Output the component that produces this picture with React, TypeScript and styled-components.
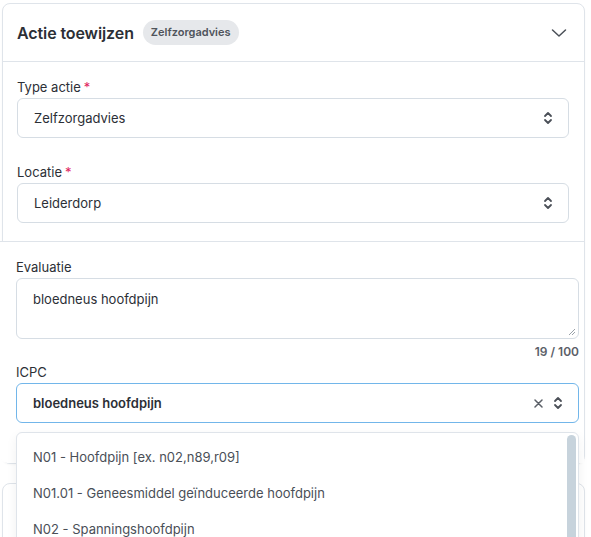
import React from 'react';
import styled, { createGlobalStyle } from 'styled-components';

const colors = {
  text: '#2c2f36',
  textSoft: '#4a4f57',
  textMuted: '#5b6068',
  border: '#dfe4ea',
  inputBorder: '#d6dde4',
  focus: '#72b6ea',
  required: '#e0245e',
  badgeBg: '#e6e8eb',
  thumb: '#c7d3dc',
};

const GlobalStyle = createGlobalStyle`
  html, body { margin: 0; background: #fff; }
  body {
    font-family: Inter, "Noto Sans", sans-serif;
    color: ${colors.text};
    -webkit-font-smoothing: antialiased;
  }
  * { box-sizing: border-box; }
`;

const Page = styled.div`
  padding: 3px 6px 0 2px;
  display: flex;
  flex-direction: column;
  gap: 19px;
  height: 537px;
  overflow: hidden;
`;

const Card = styled.section`
  border: 1px solid ${colors.border};
  border-radius: 8px;
  background: #fff;
  box-shadow: 0 1px 2px rgba(16, 24, 40, 0.03);
  flex-shrink: 0;
`;

const NextCard = styled(Card)`
  height: 160px;
`;

const Header = styled.header`
  height: 58px;
  display: flex;
  align-items: center;
  gap: 9px;
  padding: 0 17px 0 14px;
  border-bottom: 1px solid ${colors.border};
`;

const Title = styled.h2`
  margin: 0;
  font-size: 16px;
  font-weight: 600;
  letter-spacing: -0.1px;
  color: ${colors.text};
`;

const Badge = styled.span`
  background: ${colors.badgeBg};
  color: #4f545b;
  border-radius: 999px;
  padding: 5px 8px;
  font-size: 11px;
  font-weight: 600;
  line-height: 15px;
`;

const Toggle = styled.button`
  margin-left: auto;
  border: none;
  background: none;
  padding: 0;
  display: flex;
  color: #4b5058;
`;

const Section = styled.div`
  padding: 16px 15px 18px 14px;
  display: flex;
  flex-direction: column;
`;

const OverlaySection = styled.div`
  position: relative;
  margin: 0 0 0 -3px;
  padding: 16px 5px 40px 16px;
  border-top: 1px solid ${colors.border};
  border-bottom-left-radius: 8px;
  background: #fff;
  display: flex;
  flex-direction: column;
`;

const Field = styled.div<{ gapAfter?: number }>`
  position: relative;
  display: flex;
  flex-direction: column;
  margin-bottom: ${({ gapAfter }) => gapAfter ?? 0}px;
`;

const Label = styled.label`
  font-size: 13px;
  line-height: 18px;
  margin-bottom: 2px;
  color: ${colors.text};
`;

const Star = styled.span`
  color: ${colors.required};
  margin-left: 3px;
`;

const Control = styled.div<{ focused?: boolean }>`
  height: 40px;
  display: flex;
  align-items: center;
  gap: 10px;
  padding: 0 15px 0 16px;
  border: ${({ focused }) => (focused ? `1.5px solid ${colors.focus}` : `1px solid ${colors.inputBorder}`)};
  border-radius: 6px;
  background: #fff;
  font-size: 13px;
  color: ${colors.text};
`;

const Value = styled.span<{ strong?: boolean }>`
  flex: 1;
  font-weight: ${({ strong }) => (strong ? 600 : 400)};
`;

const TextArea = styled.div`
  position: relative;
  height: 61px;
  padding: 11px 16px;
  border: 1px solid ${colors.inputBorder};
  border-radius: 6px;
  font-size: 13px;
  line-height: 18px;
  color: ${colors.text};
`;

const Grip = styled.svg`
  position: absolute;
  right: 2px;
  bottom: 2px;
`;

const Counter = styled.div`
  align-self: flex-end;
  font-size: 12px;
  font-weight: 600;
  line-height: 16px;
  margin: 5px 0 3px;
  color: ${colors.textMuted};
`;

const Menu = styled.div`
  position: absolute;
  top: calc(100% + 9px);
  left: 0;
  right: 0;
  height: 220px;
  background: #fff;
  border: 1px solid ${colors.border};
  border-radius: 6px;
  box-shadow: 0 4px 12px rgba(16, 24, 40, 0.06);
  overflow: hidden;
  z-index: 5;
`;

const OptionList = styled.ul`
  margin: 0;
  padding: 6px 14px 6px 0;
  list-style: none;
`;

const Thumb = styled.div`
  position: absolute;
  top: 2px;
  right: 2px;
  width: 9px;
  height: 150px;
  border-radius: 5px;
  background: ${colors.thumb};
`;

const Option = styled.li`
  height: 36px;
  display: flex;
  align-items: center;
  padding: 0 16px;
  font-size: 13px;
  color: ${colors.textSoft};
  white-space: nowrap;
`;

const UpDown = () => (
  <svg width="10" height="16" viewBox="0 0 10 16" fill="none" stroke="#4b5058" strokeWidth="1.8" strokeLinecap="round" strokeLinejoin="round">
    <path d="M2 6 L5 3 L8 6" />
    <path d="M2 10 L5 13 L8 10" />
  </svg>
);

const Chevron = () => (
  <svg width="16" height="10" viewBox="0 0 16 10" fill="none" stroke="#4b5058" strokeWidth="1.5" strokeLinecap="round" strokeLinejoin="round">
    <path d="M1.5 2 L8 8 L14.5 2" />
  </svg>
);

const Clear = () => (
  <svg width="9" height="9" viewBox="0 0 9 9" fill="none" stroke="#5b6068" strokeWidth="1.5" strokeLinecap="round">
    <path d="M1 1 L8 8 M8 1 L1 8" />
  </svg>
);

const icpcOptions = [
  'N01 - Hoofdpijn [ex. n02,n89,r09]',
  'N01.01 - Geneesmiddel geïnduceerde hoofdpijn',
  'N02 - Spanningshoofdpijn',
  'N02.01 - Clusterhoofdpijn',
  'N89 - Migraine',
  'R09 - Sinusitis',
];

export default function App() {
  const evaluation = 'bloedneus hoofdpijn';
  return (
    <>
      <GlobalStyle />
      <Page>
        <Card>
          <Header>
            <Title>Actie toewijzen</Title>
            <Badge>Zelfzorgadvies</Badge>
            <Toggle aria-label="Inklappen"><Chevron /></Toggle>
          </Header>

          <Section>
            <Field gapAfter={25}>
              <Label>Type actie<Star>*</Star></Label>
              <Control>
                <Value>Zelfzorgadvies</Value>
                <UpDown />
              </Control>
            </Field>
            <Field>
              <Label>Locatie<Star>*</Star></Label>
              <Control>
                <Value>Leiderdorp</Value>
                <UpDown />
              </Control>
            </Field>
          </Section>

          <OverlaySection>
            <Field>
              <Label>Evaluatie</Label>
              <TextArea>
                {evaluation}
                <Grip width="8" height="8" viewBox="0 0 8 8" stroke="#9aa1a9" strokeWidth="1">
                  <path d="M7 1 L1 7 M7 4 L4 7" />
                </Grip>
              </TextArea>
              <Counter>{evaluation.length} / 100</Counter>
            </Field>
            <Field>
              <Label>ICPC</Label>
              <Control focused>
                <Value strong>bloedneus hoofdpijn</Value>
                <Clear />
                <UpDown />
              </Control>
              <Menu>
                <OptionList>
                  {icpcOptions.map((o) => (
                    <Option key={o}>{o}</Option>
                  ))}
                </OptionList>
                <Thumb />
              </Menu>
            </Field>
          </OverlaySection>
        </Card>

        <NextCard />
      </Page>
    </>
  );
}
